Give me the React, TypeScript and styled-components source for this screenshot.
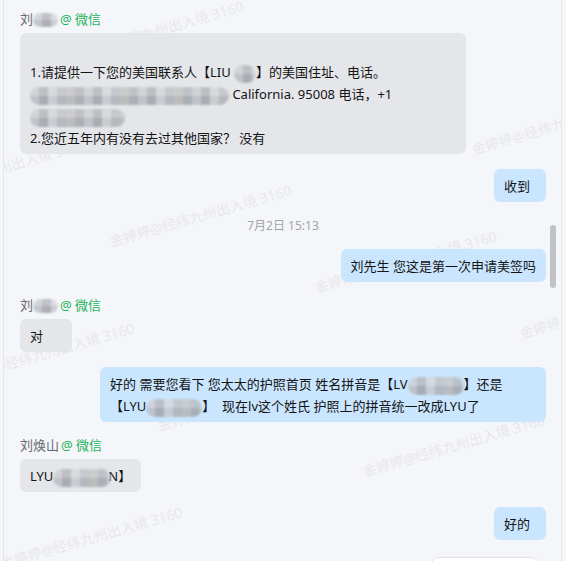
import React from 'react';
import styled, { createGlobalStyle } from 'styled-components';

const GlobalStyle = createGlobalStyle`
  html, body {
    margin: 0;
    padding: 0;
    background: #f5f6fa;
  }
  * {
    box-sizing: border-box;
  }
`;

const FONT = `"Noto Sans", "Noto Sans CJK SC", sans-serif`;

const Page = styled.div`
  height: 561px;
  overflow: hidden;
  padding-left: 3px;
  background: #f5f6fa;
  font-family: ${FONT};
`;

const Panel = styled.div`
  position: relative;
  width: 559px;
  height: 100%;
  overflow: hidden;
  border-left: 1px solid #e3e5e9;
  border-right: 1px solid #e3e5e9;
`;

const WatermarkLayer = styled.div`
  position: absolute;
  inset: 0;
  z-index: 0;
  pointer-events: none;
`;

const Watermark = styled.span`
  position: absolute;
  font-size: 14px;
  line-height: 20px;
  color: #e7e8ec;
  white-space: nowrap;
  transform: rotate(-16deg);
  transform-origin: 0 50%;
`;

const MessageList = styled.div`
  position: relative;
  z-index: 1;
  display: flex;
  flex-direction: column;
  gap: 15px;
  padding: 11px 15px 0 16px;
`;

const Group = styled.div<{ $mine?: boolean }>`
  display: flex;
  flex-direction: column;
  align-items: ${(p) => (p.$mine ? 'flex-end' : 'flex-start')};
  gap: 5px;
`;

const Sender = styled.div`
  font-size: 13px;
  line-height: 17px;
  color: #666a70;
  display: flex;
  align-items: center;
`;

const Channel = styled.span`
  color: #1db35a;
  margin-left: 2px;
`;

const Bubble = styled.div<{ $mine?: boolean; $width?: number }>`
  background: ${(p) => (p.$mine ? '#cae6ff' : '#e4e6ea')};
  border-radius: 6px;
  padding: 6px 10px 5px;
  min-width: 52px;
  width: ${(p) => (p.$width ? `${p.$width}px` : 'auto')};
  font-size: 13px;
  line-height: 22px;
  color: #141414;
`;

const Line = styled.div`
  white-space: pre;
  min-height: 22px;
`;

const TimeLabel = styled.div`
  align-self: center;
  font-size: 12px;
  line-height: 17px;
  color: #a2a4a8;
`;

const Blur = styled.span<{ $w: number; $h?: number }>`
  display: inline-block;
  width: ${(p) => p.$w}px;
  height: ${(p) => p.$h ?? 18}px;
  vertical-align: middle;
  border-radius: 9px;
  background:
    linear-gradient(180deg, rgba(255, 255, 255, 0.18) 0 50%, rgba(0, 0, 0, 0.04) 50% 100%),
    repeating-linear-gradient(
      90deg,
      #c4c6cb 0 9px,
      #a8aab1 9px 18px,
      #cfd0d4 18px 27px,
      #b4b7be 27px 36px,
      #bdbcbe 36px 45px,
      #a9adb5 45px 54px
    );
  filter: blur(1px);
  opacity: 0.85;
`;

const ScrollThumb = styled.div`
  position: absolute;
  z-index: 2;
  right: 5px;
  top: 225px;
  width: 6px;
  height: 63px;
  border-radius: 3px;
  background: #c1c2c5;
`;

const FloatPill = styled.div`
  position: absolute;
  z-index: 2;
  right: 21px;
  bottom: -14px;
  width: 110px;
  height: 18px;
  border-radius: 12px;
  background: #ffffff;
  border: 1px solid #dfe1e5;
`;

const WM_TEXT = '金婷婷@经纬九州出入境 3160';

// watermark lattice, measured from the screenshot
const marks: { x: number; y: number }[] = [];
for (let i = -2; i <= 3; i++) {
  for (let j = -2; j <= 2; j++) {
    const x = 106 + i * 205 + j * 48;
    const y = 242 + i * 46 + j * 184;
    if (x > -220 && x < 560 && y > -40 && y < 600) marks.push({ x, y });
  }
}

const App: React.FC = () => {
  return (
    <Page>
      <GlobalStyle />
      <Panel>
        <WatermarkLayer>
          {marks.map((m, idx) => (
            <Watermark key={idx} style={{ left: m.x, top: m.y - 10 }}>
              {WM_TEXT}
            </Watermark>
          ))}
        </WatermarkLayer>

        <MessageList>
          <Group>
            <Sender>
              刘<Blur $w={25} $h={14} />
              <Channel>@ 微信</Channel>
            </Sender>
            <Bubble $width={446}>
              <Line> </Line>
              <Line>
                1.请提供一下您的美国联系人【LIU <Blur $w={22} />】的美国住址、电话。
              </Line>
              <Line>
                <Blur $w={199} /> California. 95008 电话，+1
              </Line>
              <Line>
                <Blur $w={95} />
              </Line>
              <Line>2.您近五年内有没有去过其他国家？ 没有</Line>
            </Bubble>
          </Group>

          <Group $mine>
            <Bubble $mine>收到</Bubble>
          </Group>

          <TimeLabel>7月2日 15:13</TimeLabel>

          <Group $mine>
            <Bubble $mine>刘先生 您这是第一次申请美签吗</Bubble>
          </Group>

          <Group>
            <Sender>
              刘<Blur $w={25} $h={14} />
              <Channel>@ 微信</Channel>
            </Sender>
            <Bubble>对</Bubble>
          </Group>

          <Group $mine>
            <Bubble $mine $width={446}>
              <Line>
                好的 需要您看下 您太太的护照首页 姓名拼音是【LV<Blur $w={56} />】还是
              </Line>
              <Line>
                【LYU<Blur $w={56} />】  现在lv这个姓氏 护照上的拼音统一改成LYU了
              </Line>
            </Bubble>
          </Group>

          <Group>
            <Sender>
              刘焕山<Channel>@ 微信</Channel>
            </Sender>
            <Bubble>
              LYU<Blur $w={58} style={{ marginRight: -3 }} />N】
            </Bubble>
          </Group>

          <Group $mine>
            <Bubble $mine>好的</Bubble>
          </Group>
        </MessageList>

        <ScrollThumb />
        <FloatPill />
      </Panel>
    </Page>
  );
};

export default App;
